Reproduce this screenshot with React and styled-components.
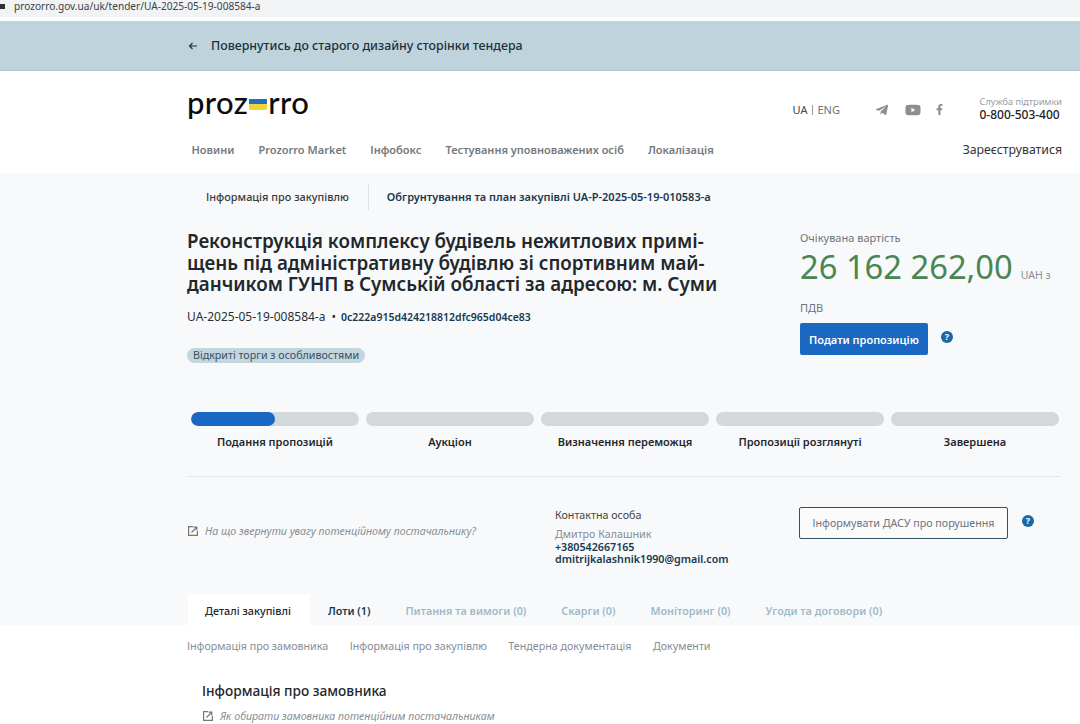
import React from "react";
import styled, { createGlobalStyle } from "styled-components";
import { FaTelegramPlane, FaYoutube, FaFacebookF } from "react-icons/fa";

const steps = [
  { name: "Подання пропозицій", progress: 50 },
  { name: "Аукціон", progress: 0 },
  { name: "Визначення переможця", progress: 0 },
  { name: "Пропозиції розглянуті", progress: 0 },
  { name: "Завершена", progress: 0 },
];

const navItems = ["Новини", "Prozorro Market", "Інфобокс", "Тестування уповноважених осіб", "Локалізація"];

const tabs = [
  { name: "Деталі закупівлі", kind: "active" },
  { name: "Лоти (1)", kind: "dark" },
  { name: "Питання та вимоги (0)" },
  { name: "Скарги (0)" },
  { name: "Моніторинг (0)" },
  { name: "Угоди та договори (0)" },
];

const subTabs = ["Інформація про замовника", "Інформація про закупівлю", "Тендерна документація", "Документи"];

function ExternalIcon() {
  return (
    <svg width="10" height="10" viewBox="0 0 10 10" fill="none" stroke="#777" strokeWidth="1.2">
      <path d="M9.4 5v4.4H.6V.6H5" />
      <path d="M3.5 6.5l5-5M5.6 1.2h3.2v3.2" />
    </svg>
  );
}

export default function App() {
  return (
    <>
      <GlobalStyle />
      <Page>
        <AddressBar>
          <Lock />
          prozorro.gov.ua/uk/tender/UA-2025-05-19-008584-a
        </AddressBar>
        <Banner>
          <BackArrow viewBox="0 0 10 10" fill="none" stroke="#1c2f3a" strokeWidth="1.1">
            <path d="M9 5H1.5M4.5 2 1.5 5l3 3" />
          </BackArrow>
          Повернутись до старого дизайну сторінки тендера
        </Banner>

        <Header>
          <HeaderTop>
            <Logo>
              proz<Flag />rro
            </Logo>
            <HeaderRight>
              <Lang>
                UA<LangBar />
                <LangOff>ENG</LangOff>
              </Lang>
              <Socials>
                <FaTelegramPlane size={14} />
                <FaYoutube size={16} />
                <FacebookMark size={11} />
              </Socials>
              <Support>
                <SupportLabel>Служба підтримки</SupportLabel>
                <Phone>0-800-503-400</Phone>
              </Support>
            </HeaderRight>
          </HeaderTop>
          <NavRow>
            <Nav>
              {navItems.map((item) => (
                <NavLink key={item}>{item}</NavLink>
              ))}
            </Nav>
            <Register>Зареєструватися</Register>
          </NavRow>
        </Header>

        <Main>
          <Crumbs>
            <CrumbPlain>Інформація про закупівлю</CrumbPlain>
            <CrumbBold>Обгрунтування та план закупівлі UA-P-2025-05-19-010583-a</CrumbBold>
          </Crumbs>

          <Summary>
            <SummaryLeft>
              <Title>
                Реконструкція комплексу будівель нежитлових примі-
                <br />
                щень під адміністративну будівлю зі спортивним май-
                <br />
                данчиком ГУНП в Сумській області за адресою: м. Суми
              </Title>
              <Ids>
                UA-2025-05-19-008584-a
                <Dot>•</Dot>
                <Hash>0c222a915d424218812dfc965d04ce83</Hash>
              </Ids>
              <Badge>Відкриті торги з особливостями</Badge>
            </SummaryLeft>
            <SummaryRight>
              <PriceLabel>Очікувана вартість</PriceLabel>
              <PriceRow>
                <Price>26 162 262,00</Price>
                <Currency>UAH з</Currency>
              </PriceRow>
              <PriceLabel>ПДВ</PriceLabel>
              <ActionRow>
                <SubmitButton>Подати пропозицію</SubmitButton>
                <Help>?</Help>
              </ActionRow>
            </SummaryRight>
          </Summary>

          <Steps>
            {steps.map((step) => (
              <Step key={step.name}>
                <Track>
                  <Fill style={{ width: `${step.progress}%` }} />
                </Track>
                <StepName>{step.name}</StepName>
              </Step>
            ))}
          </Steps>

          <Divider />

          <ContactRow>
            <Hint>
              <ExternalIcon />
              На що звернути увагу потенційному постачальнику?
            </Hint>
            <Contact>
              <ContactTitle>Контактна особа</ContactTitle>
              <ContactName>Дмитро Калашник</ContactName>
              <ContactPhone>+380542667165</ContactPhone>
              <ContactMail>dmitrijkalashnik1990@gmail.com</ContactMail>
            </Contact>
            <ReportBox>
              <ReportButton>Інформувати ДАСУ про порушення</ReportButton>
              <Help>?</Help>
            </ReportBox>
          </ContactRow>

          <Tabs>
            {tabs.map((tab) => (
              <Tab key={tab.name} $kind={tab.kind}>
                {tab.name}
              </Tab>
            ))}
          </Tabs>
        </Main>

        <Details>
          <SubTabs>
            {subTabs.map((item) => (
              <SubTab key={item}>{item}</SubTab>
            ))}
          </SubTabs>
          <SectionTitle>Інформація про замовника</SectionTitle>
          <SectionHint>
            <ExternalIcon />
            Як обирати замовника потенційним постачальникам
          </SectionHint>
        </Details>
      </Page>
    </>
  );
}

const GlobalStyle = createGlobalStyle`
  html, body {
    margin: 0;
    padding: 0;
    background: #fff;
  }
  * {
    box-sizing: border-box;
  }
`;

const Page = styled.div`
  width: 1080px;
  height: 724px;
  overflow: hidden;
  font-family: "Noto Sans", "Open Sans", sans-serif;
  color: #1c2b36;
`;

const AddressBar = styled.div`
  height: 17px;
  margin-bottom: 4px;
  padding-left: 14px;
  background: #f1f3f4;
  font-size: 10.1px;
  line-height: 13px;
  color: #3c4043;
  position: relative;
`;

const Lock = styled.span`
  position: absolute;
  left: 0;
  top: 4px;
  width: 5px;
  height: 5px;
  background: #333;
`;

const Banner = styled.div`
  height: 50px;
  padding-left: 188px;
  display: flex;
  align-items: center;
  background: #bfd3dc;
  border-bottom: 1px solid #b2c7d1;
  font-size: 12.4px;
  font-weight: 500;
  color: #1c2f3a;
`;

const BackArrow = styled.svg`
  width: 10px;
  height: 10px;
  margin-right: 13px;
`;

const Header = styled.header`
  height: 102px;
  padding: 0 18px 0 187px;
  background: #fff;
`;

const HeaderTop = styled.div`
  height: 66px;
  display: flex;
  justify-content: space-between;
  align-items: flex-start;
`;

const Logo = styled.div`
  margin-top: 13px;
  font-family: "Lato", sans-serif;
  font-size: 31px;
  line-height: 36px;
  font-weight: 500;
  letter-spacing: 0.4px;
  color: #0c0c0c;
  display: flex;
  align-items: center;
`;

const Flag = styled.span`
  width: 18px;
  height: 11px;
  margin: 4px 1px 0 1px;
  background: linear-gradient(#1f6fc4 50%, #f4d432 50%);
`;

const HeaderRight = styled.div`
  display: flex;
  align-items: center;
  margin-top: 25px;
`;

const Lang = styled.div`
  width: 82px;
  margin-left: 1px;
  font-size: 11px;
  display: flex;
  align-items: center;
  color: #444;
`;

const LangBar = styled.span`
  width: 1px;
  height: 10px;
  margin: 0 4.5px;
  background: #99a;
`;

const LangOff = styled.span`
  color: #6c757d;
`;

const Socials = styled.div`
  width: 105px;
  display: flex;
  align-items: center;
  gap: 16px;
  color: #8a8f94;
`;

const FacebookMark = styled(FaFacebookF)`
  margin-left: -3px;
`;

const Support = styled.div`
  display: flex;
  flex-direction: column;
`;

const SupportLabel = styled.span`
  font-size: 9.2px;
  line-height: 11px;
  color: #9a9ea2;
`;

const Phone = styled.span`
  font-size: 12px;
  line-height: 16px;
  font-weight: 500;
  color: #222;
`;

const NavRow = styled.div`
  display: flex;
  justify-content: space-between;
  align-items: center;
  height: 24px;
`;

const Nav = styled.nav`
  display: flex;
  gap: 24px;
  padding-left: 4.5px;
`;

const NavLink = styled.a`
  font-size: 11px;
  font-weight: 600;
  color: #74797e;
`;

const Register = styled.a`
  font-size: 12.3px;
  color: #333;
`;

const Main = styled.main`
  height: 452px;
  padding: 0 20px 0 187px;
  background: #f8f9fa;
  display: flex;
  flex-direction: column;
`;

const Crumbs = styled.div`
  height: 48px;
  display: flex;
  align-items: center;
  font-size: 11px;
`;

const CrumbPlain = styled.span`
  padding: 0 19px 0 19px;
  height: 26px;
  line-height: 26px;
  border-right: 1px solid #dfe2e4;
  font-size: 10.9px;
  font-weight: 500;
  color: #343a40;
`;

const CrumbBold = styled.span`
  padding-left: 18px;
  line-height: 26px;
  font-weight: 600;
  color: #17384e;
`;

const Summary = styled.section`
  height: 161px;
  display: flex;
  justify-content: space-between;
`;

const SummaryLeft = styled.div`
  padding-top: 10px;
`;

const Title = styled.h1`
  margin: 0;
  font-size: 18.8px;
  line-height: 21.5px;
  font-weight: 600;
  color: #22272c;
  white-space: nowrap;
`;

const Ids = styled.div`
  margin-top: 13px;
  display: flex;
  align-items: center;
  font-size: 12px;
  line-height: 16px;
  color: #2a3036;
`;

const Dot = styled.span`
  margin: 0 5px 0 6px;
`;

const Hash = styled.span`
  font-size: 10.5px;
  font-weight: 600;
  color: #17384e;
`;

const Badge = styled.div`
  display: inline-block;
  margin-top: 23px;
  padding: 0 6px;
  border-radius: 8px;
  background: #c3d5de;
  font-size: 10.7px;
  line-height: 15px;
  color: #37505f;
`;

const SummaryRight = styled.div`
  width: 260px;
  padding-top: 9px;
`;

const PriceLabel = styled.div`
  font-size: 11px;
  line-height: 15px;
  color: #6c757d;
`;

const PriceRow = styled.div`
  display: flex;
  align-items: baseline;
  height: 55px;
`;

const Price = styled.span`
  font-size: 32.7px;
  line-height: 44px;
  font-weight: 400;
  color: #4a8552;
`;

const Currency = styled.span`
  margin-left: 8px;
  font-size: 10.5px;
  color: #868e96;
`;

const ActionRow = styled.div`
  margin-top: 8px;
  display: flex;
  align-items: flex-start;
`;

const SubmitButton = styled.button`
  width: 128px;
  height: 32px;
  padding: 0;
  border: 0;
  border-radius: 2px;
  background: #1a68c2;
  font-family: inherit;
  font-size: 11px;
  font-weight: 600;
  color: #fff;
`;

const Help = styled.span`
  width: 12px;
  height: 12px;
  margin: 8px 0 0 13px;
  border-radius: 50%;
  background: #1a68a8;
  color: #fff;
  font-size: 9px;
  font-weight: 700;
  line-height: 12px;
  text-align: center;
`;

const Steps = styled.div`
  margin-left: 4px;
  padding-top: 30px;
  display: grid;
  grid-template-columns: repeat(5, 168px);
  column-gap: 7px;
`;

const Step = styled.div`
  text-align: center;
`;

const Track = styled.div`
  height: 14px;
  border-radius: 7px;
  background: #d3d8dc;
  overflow: hidden;
`;

const Fill = styled.div`
  height: 100%;
  border-radius: 7px;
  background: #1a68c2;
`;

const StepName = styled.div`
  margin-top: 8px;
  font-size: 11px;
  line-height: 15px;
  font-weight: 600;
  color: #22272c;
`;

const Divider = styled.hr`
  margin: 27px 0 0;
  border: 0;
  border-top: 1px solid #e2e4e6;
`;

const ContactRow = styled.section`
  display: flex;
  align-items: flex-start;
`;

const Hint = styled.div`
  width: 368px;
  margin-top: 47px;
  padding-left: 1px;
  display: flex;
  align-items: center;
  gap: 7px;
  font-size: 10.6px;
  font-style: italic;
  color: #868e96;
`;

const Contact = styled.div`
  width: 244px;
  margin-top: 31px;
  display: flex;
  flex-direction: column;
`;

const ContactTitle = styled.span`
  margin-bottom: 5px;
  font-size: 10.7px;
  line-height: 15px;
  color: #444;
`;

const ContactName = styled.span`
  font-size: 10.7px;
  line-height: 13px;
  color: #868e96;
`;

const ContactPhone = styled.span`
  font-size: 10.7px;
  line-height: 13px;
  font-weight: 600;
  color: #17384e;
`;

const ContactMail = styled(ContactPhone)`
  margin-top: -1px;
`;

const ReportBox = styled.div`
  margin-top: 30px;
  display: flex;
  align-items: flex-start;
`;

const ReportButton = styled.button`
  width: 209px;
  height: 32px;
  margin-right: 1px;
  padding: 0;
  border: 1px solid #2f5468;
  border-radius: 2px;
  background: #fbfbfc;
  font-family: inherit;
  font-size: 10.7px;
  color: #6c757d;
`;

const Tabs = styled.nav`
  margin-top: auto;
  display: flex;
  height: 31px;
`;

const Tab = styled.a`
  padding: ${(p) => (p.$kind === "active" ? "0 19px 0 17px" : "0 17px 0 18px")};
  margin-left: ${(p) => (p.$kind === "active" ? "1px" : "0")};
  line-height: 34px;
  font-size: 10.8px;
  font-weight: ${(p) => (p.$kind === "active" ? 500 : 600)};
  color: ${(p) => (p.$kind === "active" ? "#22272c" : p.$kind === "dark" ? "#17384e" : "#9dbac9")};
  background: ${(p) => (p.$kind === "active" ? "#fff" : "transparent")};
`;

const Details = styled.section`
  padding-left: 187px;
  background: #fff;
`;

const SubTabs = styled.div`
  height: 41px;
  display: flex;
  align-items: center;
  gap: 21.5px;
`;

const SubTab = styled.a`
  font-size: 10.7px;
  color: #868e96;
`;

const SectionTitle = styled.h2`
  margin: 16px 0 0 15px;
  font-size: 13.7px;
  line-height: 18px;
  font-weight: 500;
  color: #22272c;
`;

const SectionHint = styled.div`
  margin: 9px 0 0 16px;
  display: flex;
  align-items: center;
  gap: 7px;
  font-size: 10.6px;
  font-style: italic;
  color: #868e96;
`;
